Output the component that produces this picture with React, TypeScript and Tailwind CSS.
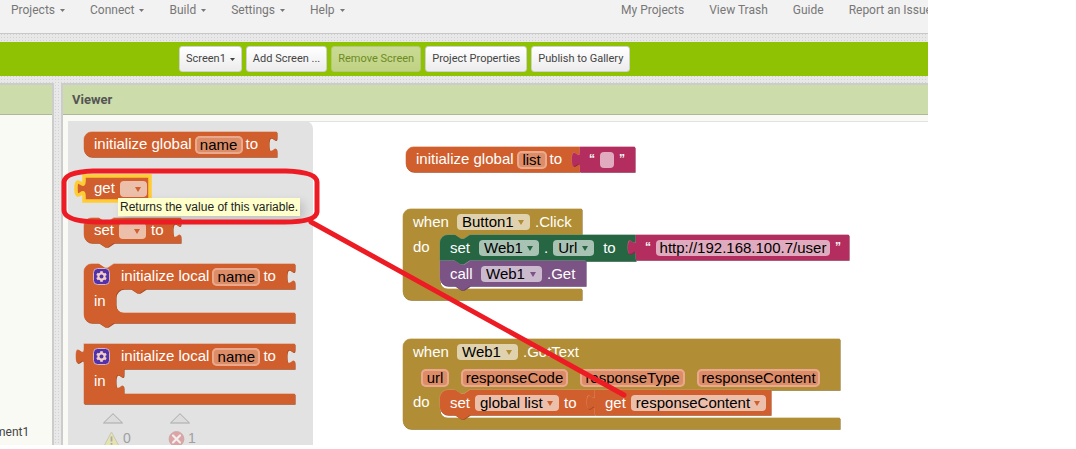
import type { ReactNode } from 'react'
import clsx from 'clsx'

// Connector pieces shared by every block outline
const SOCKET = 'v5 c0 10 -8 -8 -8 7.5 s8 -2.5 8 7.5'
const PLUG = 'V20 c0 -10 -8 8 -8 -7.5 s8 2.5 8 -7.5'
const NOTCH = 'l6 4 h3 l6 -4'
const BUMP = 'l-6 4 h-3 l-6 -4'
const ROUND_START = 'M0 8 a8 8 0 0 1 8 -8'
const ROUND_END = 'H8 a8 8 0 0 1 -8 -8 Z'

const SHAPES = {
  globalName: `${ROUND_START} H193 ${SOCKET} V25 ${ROUND_END}`,
  get: `M0 0 H66 V25 H0 ${PLUG} Z`,
  set: `${ROUND_START} H15 ${NOTCH} H97 ${SOCKET} V25 H30 ${BUMP} ${ROUND_END}`,
  localDo: `${ROUND_START} H15 ${NOTCH} H211 ${SOCKET} V25 H62 ${BUMP} H40 a8 8 0 0 0 -8 8 V41 a8 8 0 0 0 8 8 H211 V59 H30 ${BUMP} ${ROUND_END}`,
  localReturn: `M0 0 H211 ${SOCKET} V25 H40 ${SOCKET} V50 H211 V60 H0 ${PLUG} Z`,
  globalList: `${ROUND_START} H174 ${SOCKET} V25 ${ROUND_END}`,
  emptyText: `M0 0 H55 V25 H0 ${PLUG} Z`,
  click: `${ROUND_START} H179 V26 H67 ${BUMP} H45 a8 8 0 0 0 -8 8 V72 a8 8 0 0 0 8 8 H179 V91 ${ROUND_END}`,
  setUrl: `${ROUND_START} H15 ${NOTCH} H196 ${SOCKET} V26 H30 ${BUMP} H0 Z`,
  urlText: `M0 0 H213 V25 H0 ${PLUG} Z`,
  callGet: `M0 0 H15 ${NOTCH} H146 V25 H30 ${BUMP} ${ROUND_END}`,
  gotText: `${ROUND_START} H437 V51 H67 ${BUMP} H45 a8 8 0 0 0 -8 8 V71 a8 8 0 0 0 8 8 H437 V90 ${ROUND_END}`,
  setGlobal: `${ROUND_START} H15 ${NOTCH} H155 ${SOCKET} V25 H30 ${BUMP} ${ROUND_END}`,
  getContent: `M0 0 H176 V25 H0 ${PLUG} Z`,
}

const TONES = {
  orange: { fill: '#d05f2d', light: '#de8f6c', dark: '#a64c24' },
  gold: { fill: '#b18e35', light: '#c8b072', dark: '#8e722a' },
  green: { fill: '#266643', light: '#67947b', dark: '#1e5236' },
  purple: { fill: '#7c5385', light: '#a387aa', dark: '#63426a' },
  pink: { fill: '#b32d5e', light: '#ca6c8e', dark: '#8f244b' },
}

type BlockProps = {
  shape: keyof typeof SHAPES
  tone: keyof typeof TONES
  className: string
  selected?: boolean
  children: ReactNode
}

function Block({ shape, tone, className, selected, children }: BlockProps) {
  const d = SHAPES[shape]
  const { fill, light, dark } = TONES[tone]
  return (
    <div className={clsx('shrink-0', className)}>
      <div className="relative">
        <svg className="absolute top-0 left-0 h-px w-px overflow-visible" aria-hidden="true">
          <path d={d} fill={light} transform="translate(-0.4 -0.4)" />
          <path d={d} fill={dark} transform="translate(0.6 0.8)" />
          <path d={d} fill={fill} stroke={selected ? '#fc3' : 'none'} strokeWidth="3.5" />
        </svg>
        <div className="relative">{children}</div>
      </div>
    </div>
  )
}

function Row({ children, className = 'h-[26px] gap-[5px] pl-[10px]' }: { children: ReactNode; className?: string }) {
  return <div className={clsx('flex items-center whitespace-nowrap', className)}>{children}</div>
}

function NameField({ value, label, className }: { value: string; label: string; className: string }) {
  return (
    <input
      aria-label={label}
      defaultValue={value}
      className={clsx('h-[18px] rounded-[5px] bg-[#dd8c68] text-center leading-[18px] text-black shadow-[inset_0_0_0_2px_#eaa98c]', className)}
    />
  )
}

function Picker({ value, label, className, arrow }: { value: string; label: string; className: string; arrow: string }) {
  return (
    <span className="relative flex">
      <select
        aria-label={label}
        className={clsx('h-[16px] appearance-none rounded-[4px] pl-[5px] leading-[16px] text-black', className)}
      >
        <option>{value}</option>
      </select>
      <svg viewBox="0 0 6 5" className={clsx('pointer-events-none absolute top-[6px] right-[6px] h-[5px] w-[6px]', arrow)} aria-hidden="true">
        <path d="M0 0h6L3 5z" fill="currentColor" />
      </svg>
    </span>
  )
}

function TextField({ value, className }: { value: string; className: string }) {
  return (
    <Row className="h-[26px] gap-[5px] pl-[9px]">
      <span className="h-[18px] text-[12px] leading-[16px] font-bold">“</span>
      <input
        aria-label="Text value"
        defaultValue={value}
        className={clsx('h-[16px] rounded-[4px] bg-[#e1abbf] text-center text-black', className)}
      />
      <span className="h-[18px] text-[12px] leading-[16px] font-bold">”</span>
    </Row>
  )
}

function Mutator() {
  return (
    <button type="button" aria-label="Edit names" className="mr-[7px] ml-[-1px] h-[17px] w-[17px]">
      <svg viewBox="0 0 17 17" className="h-[17px] w-[17px]">
        <rect x="0.5" y="0.5" width="16" height="16" rx="4" fill="#5231ad" stroke="#d8b6c0" />
        <g fill="#f0cfc4">
          <rect x="7.2" y="3.2" width="2.6" height="10.6" />
          <rect x="7.2" y="3.2" width="2.6" height="10.6" transform="rotate(60 8.5 8.5)" />
          <rect x="7.2" y="3.2" width="2.6" height="10.6" transform="rotate(120 8.5 8.5)" />
          <circle cx="8.5" cy="8.5" r="4" />
        </g>
        <circle cx="8.5" cy="8.5" r="2" fill="#5231ad" />
      </svg>
    </button>
  )
}

function Caret() {
  return (
    <svg viewBox="0 0 5 3" className="h-[3px] w-[5px]" aria-hidden="true">
      <path d="M0 0h5L2.5 3z" fill="currentColor" />
    </svg>
  )
}

function Param({ name, className }: { name: string; className: string }) {
  return <NameField value={name} label={`Parameter ${name}`} className={className} />
}

function LocalRows() {
  return (
    <>
      <Row className="h-[25px] gap-[3px] pl-[10px]">
        <Mutator />
        <span className="pl-px">initialize local</span>
        <NameField value="name" label="Local name" className="w-[48px]" />
        <span>to</span>
      </Row>
      <Row className="h-[25px] pl-[10px]">in</Row>
    </>
  )
}

function Flyout() {
  return (
    <aside className="absolute inset-y-0 left-0 w-[245px] rounded-tr-[8px] bg-[#e2e2e2]">
      <Block shape="globalName" tone="orange" className="absolute top-[11px] left-[16px] w-[193px]">
        <Row className="h-[25px] gap-[3px] pl-[10px]">
          <span>initialize global</span>
          <NameField value="name" label="Global name" className="w-[48px]" />
          <span>to</span>
        </Row>
      </Block>

      <Block shape="get" tone="orange" selected className="absolute top-[55px] left-[16px] w-[66px]">
        <Row className="h-[25px] gap-[5px] pl-[10px]">
          <span>get</span>
          <Picker value="" label="Variable" className="w-[27px] bg-[#ecbfab]" arrow="text-[#d05f2d]" />
        </Row>
      </Block>

      <Block shape="set" tone="orange" className="absolute top-[97px] left-[16px] w-[97px]">
        <Row className="h-[25px] gap-[5px] pl-[10px]">
          <span>set</span>
          <Picker value="" label="Variable" className="w-[27px] bg-[#ecbfab]" arrow="text-[#d05f2d]" />
          <span>to</span>
        </Row>
      </Block>

      <Block shape="localDo" tone="orange" className="absolute top-[143px] left-[16px] w-[211px]">
        <LocalRows />
      </Block>

      <Block shape="localReturn" tone="orange" className="absolute top-[223px] left-[16px] w-[211px]">
        <LocalRows />
      </Block>

      <div className="absolute top-[292px] left-[35px] flex gap-[36px] text-[14px] text-[#a0a0a0]">
        <div className="flex w-[31px] flex-col">
          <svg viewBox="0 0 20 11" className="h-[11px] w-[20px]" aria-hidden="true">
            <path d="M.5 10L10 .7 19.5 10z" fill="#dcdcdc" stroke="#a8a8a8" />
          </svg>
          <div className="mt-[4px] flex items-center gap-[3px]">
            <svg viewBox="0 0 17 16" className="h-[16px] w-[17px]" aria-hidden="true">
              <path d="M8.5 1L16 15H1z" fill="#e5e3ae" stroke="#c9c8b8" strokeLinejoin="round" />
              <path d="M8.5 5.5v5M8.5 12v1.7" stroke="#aaa" strokeWidth="1.8" />
            </svg>
            <span>0</span>
          </div>
        </div>
        <div className="flex w-[31px] flex-col">
          <svg viewBox="0 0 20 11" className="h-[11px] w-[20px]" aria-hidden="true">
            <path d="M.5 10L10 .7 19.5 10z" fill="#dcdcdc" stroke="#a8a8a8" />
          </svg>
          <div className="mt-[4px] flex items-center gap-[3px]">
            <svg viewBox="0 0 17 16" className="-ml-[2px] h-[16px] w-[17px]" aria-hidden="true">
              <circle cx="8.5" cy="8" r="7.4" fill="#dfa3a3" stroke="#c9aaaa" />
              <path d="M5 4.5l7 7M12 4.5l-7 7" stroke="#efefef" strokeWidth="2.2" strokeLinecap="round" />
            </svg>
            <span>1</span>
          </div>
        </div>
      </div>
    </aside>
  )
}

function Workspace() {
  return (
    <>
      <div className="absolute top-[26px] left-[338px] flex">
        <Block shape="globalList" tone="orange" className="w-[174px]">
          <Row className="h-[25px] gap-[3px] pl-[10px]">
            <span>initialize global</span>
            <NameField value="list" label="Global name" className="w-[30px]" />
            <span>to</span>
          </Row>
        </Block>
        <Block shape="emptyText" tone="pink" className="w-[55px]">
          <TextField value="" className="w-[14px]" />
        </Block>
      </div>

      <Block shape="click" tone="gold" className="absolute top-[88px] left-[335px] w-[179px]">
        <Row>
          <span className="w-[39px]">when</span>
          <Picker value="Button1" label="Component" className="w-[73px] bg-[#e0d2ae]" arrow="text-[#b18e35]" />
          <span>.Click</span>
        </Row>
        <div className="flex">
          <span className="w-[37px] shrink-0 pt-px pl-[10px]">do</span>
          <div>
            <div className="flex">
              <Block shape="setUrl" tone="green" className="w-[196px]">
                <Row>
                  <span className="w-[24px]">set</span>
                  <Picker value="Web1" label="Component" className="w-[60px] bg-[#a8c2b4]" arrow="text-[#266643]" />
                  <span>.</span>
                  <Picker value="Url" label="Property" className="w-[41px] bg-[#a8c2b4]" arrow="text-[#266643]" />
                  <span className="pl-[4px]">to</span>
                </Row>
              </Block>
              <Block shape="urlText" tone="pink" className="w-[213px]">
                <TextField value="http://192.168.100.7/user" className="w-[174px]" />
              </Block>
            </div>
            <Block shape="callGet" tone="purple" className="w-[146px]">
              <Row>
                <span className="w-[26px]">call</span>
                <Picker value="Web1" label="Component" className="w-[61px] bg-[#cbbace]" arrow="text-[#7c5385]" />
                <span>.Get</span>
              </Row>
            </Block>
          </div>
        </div>
      </Block>

      <Block shape="gotText" tone="gold" className="absolute top-[218px] left-[335px] w-[437px]">
        <Row>
          <span className="w-[39px]">when</span>
          <Picker value="Web1" label="Component" className="w-[61px] bg-[#e0d2ae]" arrow="text-[#b18e35]" />
          <span>.GotText</span>
        </Row>
        <Row className="h-[25px] gap-[12px] pl-[18px]">
          <Param name="url" className="w-[28px]" />
          <Param name="responseCode" className="w-[107px]" />
          <Param name="responseType" className="w-[105px]" />
          <Param name="responseContent" className="w-[123px]" />
        </Row>
        <div className="flex">
          <span className="w-[37px] shrink-0 pt-px pl-[10px]">do</span>
          <Block shape="setGlobal" tone="orange" className="w-[155px]">
            <Row>
              <span>set</span>
              <Picker value="global list" label="Variable" className="w-[84px] bg-[#ecbfab]" arrow="text-[#d05f2d]" />
              <span>to</span>
            </Row>
          </Block>
          <Block shape="getContent" tone="orange" className="w-[176px]">
            <Row>
              <span>get</span>
              <Picker value="responseContent" label="Variable" className="w-[135px] bg-[#ecbfab]" arrow="text-[#d05f2d]" />
            </Row>
          </Block>
        </div>
      </Block>
    </>
  )
}

const menus = ['Projects', 'Connect', 'Build', 'Settings', 'Help']
const links = ['My Projects', 'View Trash', 'Guide', 'Report an Issue']
const actions = ['Add Screen ...', 'Remove Screen', 'Project Properties', 'Publish to Gallery']

export default function App() {
  return (
    <div className="bg-white font-[Roboto,sans-serif]">
      <div className="mr-[148px] overflow-hidden bg-[#e8e8e8] bg-[radial-gradient(#d2d2d2_25%,transparent_30%)] bg-[size:3px_3px]">
        <header className="flex h-[34px] items-start justify-between overflow-hidden border-b border-[#c8c8c8] bg-[#f2f2f2] pt-[2px] pl-[11px] text-[12px] leading-[16px] whitespace-nowrap text-[#777]">
          <nav className="flex gap-[25px]">
            {menus.map((name) => (
              <button key={name} type="button" className="flex items-center gap-[5px]">
                {name}
                <Caret />
              </button>
            ))}
          </nav>
          <nav className="-mr-[4px] flex gap-[25px]">
            {links.map((name) => (
              <a key={name} href="#">
                {name}
              </a>
            ))}
          </nav>
        </header>

        <div className="mt-[8px] flex h-[34px] items-center gap-[4px] bg-[#8fc202] pl-[179px] text-[11px] whitespace-nowrap text-[#444]">
          <button type="button" className="flex h-[26px] items-center gap-[4px] rounded-[3px] border border-[#d0d0d0] bg-linear-to-b from-white to-[#ececec] px-[6px]">
            Screen1
            <Caret />
          </button>
          {actions.map((name) => (
            <button
              key={name}
              type="button"
              disabled={name === 'Remove Screen'}
              className="h-[26px] rounded-[3px] border border-[#d0d0d0] bg-linear-to-b from-white to-[#ececec] px-[6px] disabled:border-[#b3c77a] disabled:from-[#c9db93] disabled:to-[#bfd284] disabled:text-[#6f8a25]"
            >
              {name}
            </button>
          ))}
        </div>

        <div className="mt-[7px] flex gap-[7px]">
          <section className="w-[54px] shrink-0 overflow-hidden border-t-2 border-r-2 border-[#ccc] bg-[#f9faf4]">
            <div className="h-[30px] border-b border-[#aeb79a] bg-[#ccdcaa]" />
            <p className="mt-[309px] -ml-[5px] text-[12px] leading-[16px] text-[#444]">ment1</p>
          </section>

          <section className="min-w-0 flex-1 border-t-2 border-l-2 border-[#ccc] bg-[#f9faf4]">
            <h2 className="flex h-[30px] items-center border-b border-[#aeb79a] bg-[#ccdcaa] pl-[9px] text-[13px] font-bold text-[#555]">
              Viewer
            </h2>
            <div className="pt-[6px] pl-[5px]">
              <div className="relative h-[324px] bg-white font-['Liberation_Sans',sans-serif] text-[15px] text-white">
                <div className="absolute inset-0 overflow-hidden border-t border-[#e2e2e2]" />
                <Flyout />
                <Workspace />

                <div role="tooltip" className="absolute top-[77px] left-[50px] h-[18px] bg-[#ffffcb] px-[2px] text-[12px] leading-[18px] whitespace-nowrap text-[#222] shadow-[4px_4px_10px_rgba(0,0,0,0.15)]">
                  Returns the value of this variable.
                </div>

                {/* Red marker from the drawer entry to its use in the program */}
                <svg className="pointer-events-none absolute top-0 left-0 h-px w-px overflow-visible" aria-hidden="true">
                  <g fill="none" stroke="#ed1c24" strokeWidth="5" strokeLinecap="round">
                    <path d="M25 50H218Q249 51 249 61V91Q248 101 216 101H28Q-4 100 -4 89V61Q-3 51 25 50Z" />
                    <path d="M243 101L556 274" />
                  </g>
                </svg>
              </div>
            </div>
          </section>
        </div>
      </div>
    </div>
  )
}
